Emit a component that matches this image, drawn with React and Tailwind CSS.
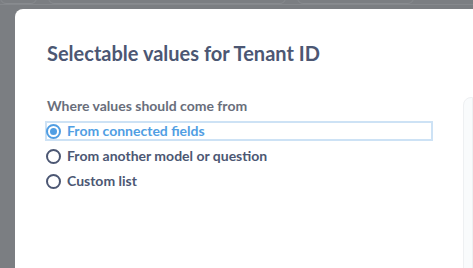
import React from 'react';

const options = [
  { label: 'From connected fields', checked: true },
  { label: 'From another model or question', checked: false },
  { label: 'Custom list', checked: false },
];

const Radio = ({ checked }) => (
  <span
    className={
      'ml-[1px] flex h-[15px] w-[15px] shrink-0 items-center justify-center rounded-full border-2 ' +
      (checked ? 'border-[#509ee3]' : 'border-[#4c5773]')
    }
  >
    {checked && <span className="h-[7px] w-[7px] rounded-full bg-[#509ee3]" />}
  </span>
);

export default function App() {
  return (
    <div className="flex h-[268px] w-[473px] flex-col overflow-hidden bg-[#7b7e82] font-['Lato',sans-serif]">
      {/* background cards behind the overlay */}
      <div className="flex h-[5px] shrink-0 gap-[11px] border-b border-[#85888c]">
        <div className="w-[37px] -mt-2 rounded-b-md border border-[#888b8f]" />
        <div className="w-[238px] -mt-2 rounded-b-md border border-[#888b8f]" />
        <div className="w-[117px] -mt-2 rounded-b-md border border-[#888b8f]" />
      </div>

      <div className="mt-[4px] ml-[15px] flex flex-1 flex-col rounded-tl-lg bg-white pl-[32px]">
        <h2 className="mt-[32px] text-[20px] font-bold leading-[24px] text-[#4c5773]">
          Selectable values for Tenant ID
        </h2>

        <div className="mt-[32px] flex">
          <div className="flex w-[386px] shrink-0 flex-col">
            <div className="text-[14px] font-bold leading-[18px] text-[#696e7b]">
              Where values should come from
            </div>
            <div className="mt-[6px] flex flex-col gap-[5px]">
              {options.map((o) => (
                <div
                  key={o.label}
                  className={
                    '-ml-[2px] flex h-[20px] w-[388px] items-center gap-[6px] ' +
                    (o.checked ? 'ring-2 ring-inset ring-[#cde2f5]' : '')
                  }
                >
                  <Radio checked={o.checked} />
                  <span
                    className={
                      'text-[14px] font-bold leading-[20px] ' +
                      (o.checked ? 'text-[#509ee3]' : 'text-[#4c5773]')
                    }
                  >
                    {o.label}
                  </span>
                </div>
              ))}
            </div>
          </div>
          <div className="ml-[30px] h-[200px] flex-1 rounded-tl-lg border border-[#eef0f2] bg-[#f9fbfc]" />
        </div>
      </div>
    </div>
  );
}
